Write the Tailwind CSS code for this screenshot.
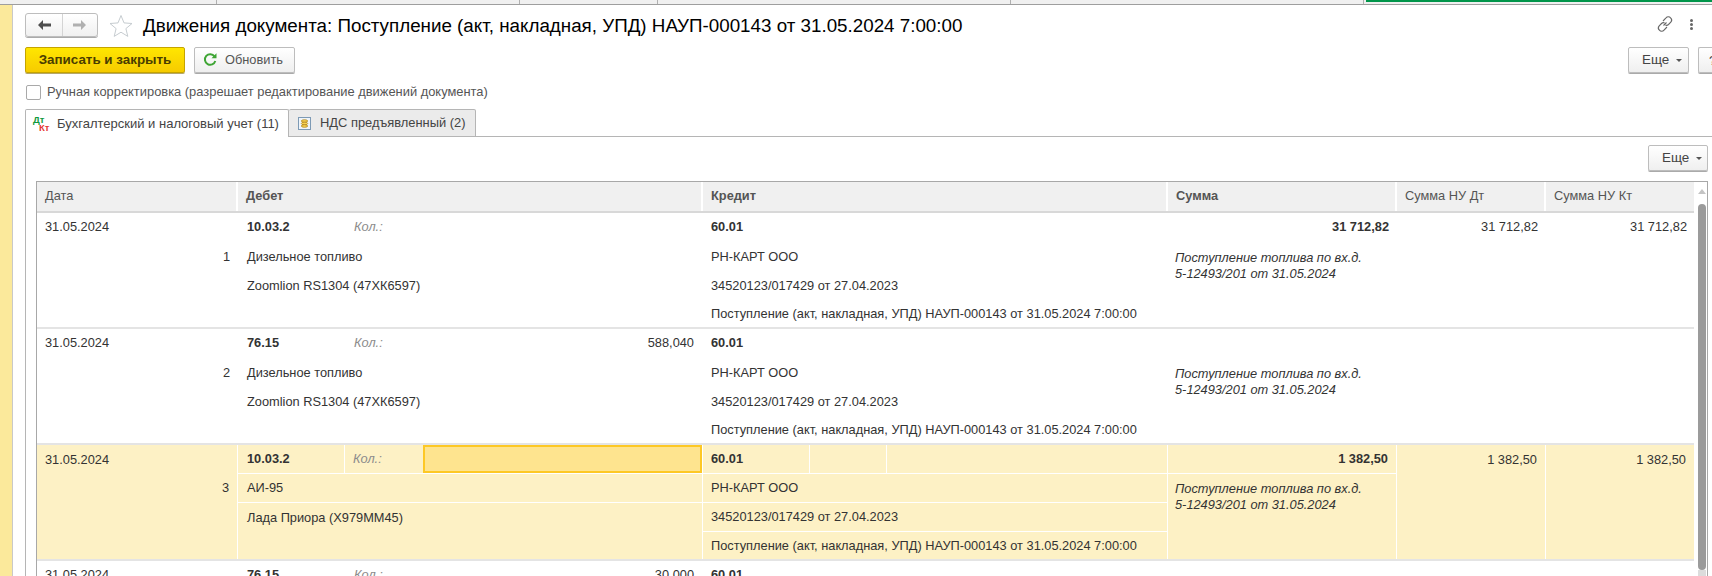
<!DOCTYPE html>
<html lang="ru">
<head>
<meta charset="utf-8">
<script src="https://cdn.jsdelivr.net/npm/@tailwindcss/browser@4"></script>
</head>
<body class="h-[576px] w-[1712px] overflow-hidden bg-white font-['Liberation_Sans',Arial,sans-serif] text-[12.8px] leading-none text-[#333]">
<div class="flex h-[5px] border-b border-[#9e9e9e] bg-[#f0f0f0]">
  <div class="w-[217px] border-r border-[#b0b0b0]"></div>
  <div class="w-[303px] border-r border-[#b0b0b0]"></div>
  <div class="w-[138px] border-r border-[#b0b0b0]"></div>
  <div class="w-[353px] border-r border-[#b0b0b0]"></div>
  <div class="w-[353px] border-r border-[#b0b0b0]"></div>
  <div class="ml-[2px] h-[2px] flex-1 bg-[#00954a]"></div>
</div>
<div class="flex h-[571px]">
  <div class="w-[13px] shrink-0 border-r border-[#c9c9c9] bg-[#fbe99b]"></div>
  <div class="flex min-w-0 flex-1 flex-col pl-[12px]">
    <div class="flex h-[42px] shrink-0 items-start pt-[8px]">
      <div class="flex h-[24px] w-[73px] rounded-[3px] border border-[#bdbdbd] bg-gradient-to-b from-white to-[#f0f0f0] shadow-[0_1px_0_#aaa]">
        <div class="flex w-[37px] items-center justify-center border-r border-[#d4d4d4]">
          <svg width="14" height="12" viewBox="0 0 14 12"><path d="M6 1 1 6l5 5V7.500h8v-3H6z" fill="#4d4d4d"/></svg>
        </div>
        <div class="flex flex-1 items-center justify-center">
          <svg width="14" height="12" viewBox="0 0 14 12"><path d="M8 1l5 5-5 5V7.500H0v-3h8z" fill="#b0b0b0"/></svg>
        </div>
      </div>
      <svg class="ml-[11px] mt-[1px]" width="24" height="23" viewBox="0 0 24 23"><path d="M12 1.500l3 7.400 8 .6-6.100 5.100 1.900 7.800L12 18.200 5.200 22.400l1.900-7.800L1 9.500l8-.6z" fill="#fff" stroke="#c6ccd0" stroke-width="1"/></svg>
      <h1 class="ml-[10px] mt-[2px] whitespace-nowrap text-[18.8px] leading-[22px] font-normal text-black">Движения документа: Поступление (акт, накладная, УПД) НАУП-000143 от 31.05.2024 7:00:00</h1>
      <svg class="ml-auto mt-[2px]" width="18" height="18" viewBox="0 0 18 18" fill="none" stroke="#666" stroke-width="1.100"><path d="M7.500 10.500 10.500 7.500"/><path d="M7 6l3-3.200a3 3 0 0 1 4.600 0 3.200 3.200 0 0 1 .2 4.400L12.500 9.500c-1 .9-2.200 1-3.200.4"/><path d="M11 12l-3 3.200a3 3 0 0 1-4.600 0 3.200 3.200 0 0 1-.2-4.400L5.500 8.500c1-.9 2.200-1 3.200-.4"/></svg>
      <div class="ml-[16px] mr-[18px] mt-[6px] flex w-[4px] flex-col gap-[1px]">
        <span class="h-[3px] w-[3px] rounded-full bg-[#666]"></span>
        <span class="h-[3px] w-[3px] rounded-full bg-[#666]"></span>
        <span class="h-[3px] w-[3px] rounded-full bg-[#666]"></span>
      </div>
    </div>
    <div class="flex h-[26px] shrink-0">
      <button class="flex h-[26px] w-[160px] items-center justify-center rounded-[2px] border border-[#c5a400] bg-gradient-to-b from-[#ffe600] to-[#f6cb00] text-[13.4px] font-bold text-[#4a3d00] shadow-[0_1px_0_#b5a76a]">Записать и закрыть</button>
      <button class="ml-[9px] flex h-[26px] w-[101px] items-center rounded-[2px] border border-[#bdbdbd] bg-gradient-to-b from-white to-[#efefef] pl-[8px] text-[#555] shadow-[0_1px_0_#aaa]">
        <svg width="14" height="14" viewBox="0 0 14 14" fill="none"><path d="M11.500 3.300A5.300 5.300 0 1 0 12.300 8" stroke="#3fa535" stroke-width="2"/><path d="M8.500 5.200h5v-5z" fill="#3fa535"/></svg>
        <span class="ml-[8px] text-[12.8px]">Обновить</span>
      </button>
      <button class="ml-auto flex h-[26px] w-[61px] items-center rounded-[2px] border border-[#bdbdbd] bg-gradient-to-b from-white to-[#efefef] pl-[13px] text-[13.4px] text-[#444] shadow-[0_1px_0_#aaa]">Еще<span class="ml-[7px] h-0 w-0 border-x-[3px] border-t-[3px] border-x-transparent border-t-[#555]"></span></button>
      <div class="ml-[9px] h-[26px] w-[14px] shrink-0 overflow-hidden rounded-l-[2px] border border-r-0 border-[#bdbdbd] bg-gradient-to-b from-white to-[#efefef] pl-[10px] pt-[6px] text-[13px] text-[#444] shadow-[0_1px_0_#aaa]">?</div>
    </div>
    <div class="flex h-[36px] shrink-0 items-center pt-[2px]">
      <span class="ml-[1px] h-[15px] w-[15px] rounded-[2px] border border-[#a9a9a9] bg-white"></span>
      <span class="ml-[6px] whitespace-nowrap text-[12.9px] text-[#555]">Ручная корректировка (разрешает редактирование движений документа)</span>
    </div>
    <div class="flex h-[28px] shrink-0 items-end">
      <div class="relative z-10 flex h-[28px] w-[264px] items-center rounded-t-[2px] border border-b-0 border-[#b5b5b5] bg-white pl-[7px]">
        <span class="flex w-[17px] flex-col text-[9.5px] font-bold leading-[8px]"><span class="text-[#109a3c]">Дт</span><span class="ml-[6px] text-[#e53935]">Кт</span></span>
        <span class="ml-[7px] whitespace-nowrap text-[13px] text-[#444]">Бухгалтерский и налоговый учет (11)</span>
      </div>
      <div class="flex h-[28px] w-[187px] items-center rounded-t-[2px] border border-l-0 border-[#b5b5b5] bg-[#ebebeb] pl-[9px]">
        <svg width="13" height="13" viewBox="0 0 13 13"><rect x=".5" y=".5" width="12" height="12" fill="#eef4fa" stroke="#7d9ab5"/><ellipse cx="6.500" cy="4" rx="3.200" ry="1.300" fill="#f7d252" stroke="#a97c12" stroke-width=".7"/><ellipse cx="6.500" cy="6.500" rx="3.200" ry="1.300" fill="#f7d252" stroke="#a97c12" stroke-width=".7"/><ellipse cx="6.500" cy="9" rx="3.200" ry="1.300" fill="#f7d252" stroke="#a97c12" stroke-width=".7"/></svg>
        <span class="ml-[9px] whitespace-nowrap text-[12.9px] text-[#444]">НДС предъявленный (2)</span>
      </div>
      <div class="h-[1px] flex-1 bg-[#b5b5b5]"></div>
    </div>
    <div class="flex min-h-0 flex-1 flex-col border-l border-[#b5b5b5] pl-[10px] pr-[4px]">
      <div class="flex h-[44px] shrink-0 justify-end pt-[8px]">
        <button class="flex h-[26px] w-[60px] items-center rounded-[2px] border border-[#bdbdbd] bg-gradient-to-b from-white to-[#efefef] pl-[13px] text-[13.4px] text-[#444] shadow-[0_1px_0_#aaa]">Еще<span class="ml-[7px] h-0 w-0 border-x-[3px] border-t-[3px] border-x-transparent border-t-[#555]"></span></button>
      </div>
      <div class="flex min-h-0 flex-1 overflow-hidden border-x border-t border-[#a8a8a8]">
        <div class="w-[1657px] shrink-0">
          <div class="flex h-[31px] items-center border-b-2 border-[#d8d8d8] bg-[#f0f0f0] text-[#555]">
            <div class="flex h-full w-[201px] items-center border-r-2 border-white pl-[8px]">Дата</div>
            <div class="flex h-full w-[465px] items-center border-r-2 border-white pl-[8px] font-bold">Дебет</div>
            <div class="flex h-full w-[465px] items-center border-r-2 border-white pl-[8px] font-bold">Кредит</div>
            <div class="flex h-full w-[229px] items-center border-r-2 border-white pl-[8px] font-bold">Сумма</div>
            <div class="flex h-full w-[149px] items-center border-r-2 border-white pl-[8px]">Сумма НУ Дт</div>
            <div class="flex h-full w-[148px] items-center pl-[8px]">Сумма НУ Кт</div>
          </div>

          <!-- row 1 -->
          <div class="flex h-[116px] border-b-2 border-[#e4e4e4]">
            <div class="w-[201px]">
              <div class="flex h-[29px] items-center pb-[1px] pl-[8px]">31.05.2024</div>
              <div class="flex h-[29px] items-center justify-end pr-[8px] pt-[1px]">1</div>
            </div>
            <div class="w-[465px]">
              <div class="flex h-[29px] items-center pb-[1px]"><span class="w-[116px] pl-[9px] font-bold">10.03.2</span><span class="italic text-[#8c8c8c]">Кол.:</span></div>
              <div class="flex h-[29px] items-center pl-[9px] pt-[1px]">Дизельное топливо</div>
              <div class="flex h-[29px] items-center pl-[9px] pt-[1px]">Zoomlion RS1304 (47ХК6597)</div>
            </div>
            <div class="w-[465px] whitespace-nowrap">
              <div class="flex h-[29px] items-center pb-[1px] pl-[8px] font-bold">60.01</div>
              <div class="flex h-[29px] items-center pl-[8px] pt-[1px]">РН-КАРТ ООО</div>
              <div class="flex h-[29px] items-center pl-[8px] pt-[1px]">34520123/017429 от 27.04.2023</div>
              <div class="flex h-[29px] items-center pl-[8px]">Поступление (акт, накладная, УПД) НАУП-000143 от 31.05.2024 7:00:00</div>
            </div>
            <div class="w-[229px]">
              <div class="flex h-[29px] items-center justify-end pb-[1px] pr-[8px] font-bold">31 712,82</div>
              <div class="pl-[7px] pt-[8px] italic leading-[16px]">Поступление топлива по вх.д.<br>5-12493/201 от 31.05.2024</div>
            </div>
            <div class="flex h-[29px] w-[149px] items-center justify-end pb-[1px] pr-[8px]">31 712,82</div>
            <div class="flex h-[29px] w-[148px] items-center justify-end pb-[1px] pr-[7px]">31 712,82</div>
          </div>

          <!-- row 2 -->
          <div class="flex h-[116px] border-b-2 border-[#e4e4e4]">
            <div class="w-[201px]">
              <div class="flex h-[29px] items-center pb-[1px] pl-[8px]">31.05.2024</div>
              <div class="flex h-[29px] items-center justify-end pr-[8px] pt-[1px]">2</div>
            </div>
            <div class="w-[465px]">
              <div class="flex h-[29px] items-center pb-[1px]"><span class="w-[116px] pl-[9px] font-bold">76.15</span><span class="italic text-[#8c8c8c]">Кол.:</span><span class="ml-auto pr-[9px]">588,040</span></div>
              <div class="flex h-[29px] items-center pl-[9px] pt-[1px]">Дизельное топливо</div>
              <div class="flex h-[29px] items-center pl-[9px] pt-[1px]">Zoomlion RS1304 (47ХК6597)</div>
            </div>
            <div class="w-[465px] whitespace-nowrap">
              <div class="flex h-[29px] items-center pb-[1px] pl-[8px] font-bold">60.01</div>
              <div class="flex h-[29px] items-center pl-[8px] pt-[1px]">РН-КАРТ ООО</div>
              <div class="flex h-[29px] items-center pl-[8px] pt-[1px]">34520123/017429 от 27.04.2023</div>
              <div class="flex h-[29px] items-center pl-[8px]">Поступление (акт, накладная, УПД) НАУП-000143 от 31.05.2024 7:00:00</div>
            </div>
            <div class="w-[229px]">
              <div class="h-[29px]"></div>
              <div class="pl-[7px] pt-[8px] italic leading-[16px]">Поступление топлива по вх.д.<br>5-12493/201 от 31.05.2024</div>
            </div>
          </div>

          <!-- row 3 (selected) -->
          <div class="flex h-[116px] border-b-2 border-[#e4e4e4] bg-[#fdf1c5]">
            <div class="w-[201px] border-r border-white">
              <div class="flex h-[29px] items-center pt-[1px] pl-[8px]">31.05.2024</div>
              <div class="flex h-[29px] items-center justify-end pr-[8px]">3</div>
            </div>
            <div class="w-[465px] border-r border-white">
              <div class="flex h-[29px] items-stretch border-b border-white">
                <span class="flex w-[107px] items-center border-r border-white pl-[9px] pt-[1px] font-bold">10.03.2</span>
                <span class="flex w-[78px] items-center pl-[8px] pt-[1px] italic text-[#8c8c8c]">Кол.:</span>
                <span class="flex-1 border-2 border-[#fdc825] bg-[#fee48f]"></span>
              </div>
              <div class="flex h-[29px] items-center border-b border-white pl-[9px]">АИ-95</div>
              <div class="flex h-[29px] items-center pl-[9px] pt-[1px]">Лада Приора (Х979ММ45)</div>
            </div>
            <div class="w-[465px] whitespace-nowrap border-r border-white">
              <div class="flex h-[29px] items-stretch border-b border-white font-bold">
                <span class="flex w-[107px] items-center border-r border-white pl-[8px] pt-[1px]">60.01</span>
                <span class="w-[77px] border-r border-white"></span>
              </div>
              <div class="flex h-[29px] items-center border-b border-white pl-[8px]">РН-КАРТ ООО</div>
              <div class="flex h-[29px] items-center border-b border-white pl-[8px] pt-[1px]">34520123/017429 от 27.04.2023</div>
              <div class="flex h-[27px] items-center pl-[8px] pt-[2px]">Поступление (акт, накладная, УПД) НАУП-000143 от 31.05.2024 7:00:00</div>
            </div>
            <div class="w-[229px] border-r border-white">
              <div class="flex h-[29px] items-center justify-end border-b border-white pr-[8px] pt-[1px] font-bold">1 382,50</div>
              <div class="pl-[7px] pt-[7px] italic leading-[16px]">Поступление топлива по вх.д.<br>5-12493/201 от 31.05.2024</div>
            </div>
            <div class="w-[149px] border-r border-white"><div class="flex h-[29px] items-center justify-end pr-[8px] pt-[1px]">1 382,50</div></div>
            <div class="w-[147px]"><div class="flex h-[29px] items-center justify-end pr-[7px] pt-[1px]">1 382,50</div></div>
          </div>

          <!-- row 4 (cut off) -->
          <div class="flex h-[116px]">
            <div class="w-[201px]"><div class="flex h-[29px] items-center pl-[8px]">31.05.2024</div></div>
            <div class="w-[465px]"><div class="flex h-[29px] items-center"><span class="w-[116px] pl-[9px] font-bold">76.15</span><span class="italic text-[#8c8c8c]">Кол.:</span><span class="ml-auto pr-[9px]">30,000</span></div></div>
            <div class="w-[465px]"><div class="flex h-[29px] items-center pl-[8px] font-bold">60.01</div></div>
          </div>
        </div>
        <div class="flex w-[14px] shrink-0 flex-col items-center pl-[1px]">
          <span class="mt-[7px] h-0 w-0 border-x-[4px] border-b-[5px] border-x-transparent border-b-[#c4c4c4]"></span>
          <div class="mt-[10px] h-[366px] w-[8px] shrink-0 rounded-[4px] bg-[#9b9b9b]"></div>
          <div class="w-[8px] flex-1 bg-[#dcdcdc]"></div>
        </div>
      </div>
    </div>
  </div>
</div>
</body>
</html>
